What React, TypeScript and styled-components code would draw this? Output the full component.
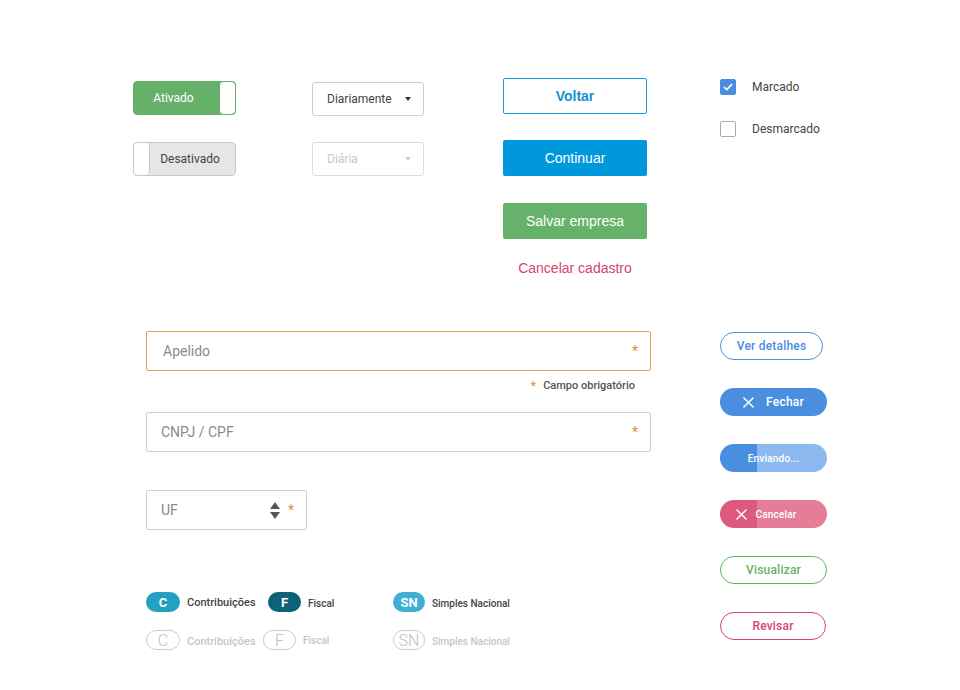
import styled, { createGlobalStyle } from 'styled-components'

const Global = createGlobalStyle`
    html, body { margin: 0; padding: 0; background: #fff; }
    body { font-family: Roboto, "Liberation Sans", sans-serif; color: #444; }
    * { box-sizing: border-box; }
`

const Page = styled.div`
    width: 960px;
    height: 690px;
    padding: 78px 0 0 133px;
`

const Top = styled.div`
    display: flex;
    align-items: flex-start;
`

const Col = styled.div<{ $w?: number, $pt?: number, $gap: number, $center?: boolean }>`
    display: flex;
    flex-direction: column;
    ${p => p.$w ? `width: ${p.$w}px;` : ''}
    padding-top: ${p => p.$pt || 0}px;
    gap: ${p => p.$gap}px;
    align-items: ${p => p.$center ? 'center' : 'flex-start'};
`

const ButtonCol = styled(Col)`
    width: 144px;
    margin-right: 73px;
`

const Toggle = styled.div<{ $on?: boolean }>`
    display: flex;
    align-items: center;
    flex-direction: ${p => p.$on ? 'row' : 'row-reverse'};
    width: 103px;
    height: 34px;
    border-radius: 4px;
    border: 1px solid ${p => p.$on ? '#66b16a' : '#c9c9c9'};
    background: ${p => p.$on ? '#66b16a' : '#e6e6e6'};
    overflow: hidden;
    > span {
        flex: 1;
        text-align: center;
        font-size: 12px;
        color: ${p => p.$on ? '#fff' : '#444'};
        padding-right: ${p => p.$on ? 6 : 5}px;
    }
    > i {
        width: 16px;
        height: 100%;
        background: #fff;
        border-radius: 4px;
        border-${p => p.$on ? 'left' : 'right'}: 1px solid ${p => p.$on ? '#66b16a' : '#c9c9c9'};
    }
`

const Select = styled.div<{ $disabled?: boolean }>`
    display: flex;
    align-items: center;
    justify-content: space-between;
    width: 112px;
    height: 34px;
    padding: 0 12px 0 14px;
    border: 1px solid ${p => p.$disabled ? '#dcdcdc' : '#cfcfcf'};
    border-radius: 3px;
    font-size: 12px;
    color: ${p => p.$disabled ? '#c8c8c8' : '#444'};
    &::after {
        content: '';
        border-left: 3.5px solid transparent;
        border-right: 3.5px solid transparent;
        border-top: 4px solid ${p => p.$disabled ? '#ccc' : '#333'};
    }
`

const Button = styled.div<{ $kind: 'outline' | 'blue' | 'green' }>`
    width: 144px;
    height: 36px;
    display: flex;
    align-items: center;
    justify-content: center;
    border-radius: 2px;
    font-family: "Liberation Sans", Arial, sans-serif;
    font-size: 14px;
    ${p => p.$kind === 'outline' ? `
        border: 1px solid #1a9ad6;
        color: #1590d0;
        font-weight: 700;
    ` : `
        background: ${p.$kind === 'blue' ? '#0098dc' : '#67b26b'};
        color: #fff;
    `}
`

const LinkButton = styled.div`
    width: 144px;
    text-align: center;
    margin-top: -5px;
    font-family: "Liberation Sans", Arial, sans-serif;
    font-size: 14px;
    color: #d6446f;
`

const Check = styled.div<{ $on?: boolean }>`
    display: flex;
    align-items: center;
    gap: 16px;
    font-size: 12px;
    color: #444;
    > i {
        width: 16px;
        height: 16px;
        border-radius: 2px;
        display: flex;
        align-items: center;
        justify-content: center;
        background: ${p => p.$on ? '#4a8ee0' : '#fff'};
        border: 1px solid ${p => p.$on ? '#4a8ee0' : '#aaa'};
    }
`

const Bottom = styled.div`
    display: flex;
    align-items: flex-start;
    margin-top: 55px;
`

const Form = styled.div`
    width: 587px;
    padding-left: 13px;
    display: flex;
    flex-direction: column;
`

const Field = styled.div<{ $focus?: boolean, $w?: number }>`
    display: flex;
    align-items: center;
    width: ${p => p.$w || 505}px;
    height: 40px;
    padding: 0 12px 0 ${p => p.$focus ? 16 : 14}px;
    border: 1px solid ${p => p.$focus ? '#e2a052' : '#d0d0d0'};
    border-radius: 2px;
    font-size: 14px;
    color: #8a8a8a;
    > span { flex: 1; }
`

const Star = styled.b<{ $size?: number }>`
    color: #f08a32;
    font-weight: 400;
    font-size: ${p => p.$size || 14}px;
`

const Required = styled.div`
    width: 505px;
    display: flex;
    justify-content: flex-end;
    align-items: center;
    gap: 7px;
    padding-right: 16px;
    margin: 7px 0 19px;
    font-size: 11px;
    font-weight: 500;
    color: #555;
`

const Stepper = styled.div`
    display: flex;
    flex-direction: column;
    gap: 3px;
    margin-right: 8px;
    &::before, &::after {
        content: '';
        border-left: 5.5px solid transparent;
        border-right: 5.5px solid transparent;
    }
    &::before { border-bottom: 7px solid #555; }
    &::after { border-top: 7px solid #555; }
`

const Tags = styled.div`
    display: flex;
    flex-direction: column;
    gap: 18px;
    margin-top: 62px;
`

const TagRow = styled.div`
    display: flex;
    align-items: center;
`

const TagCell = styled.div<{ $w?: number, $muted?: boolean }>`
    display: flex;
    align-items: center;
    gap: 7px;
    ${p => p.$w ? `width: ${p.$w}px;` : ''}
    color: ${p => p.$muted ? '#c6c6c6' : '#444'};
    font-weight: 500;
`

const Pill = styled.div<{ $bg?: string, $w: number }>`
    width: ${p => p.$w}px;
    height: 20px;
    border-radius: 10px;
    display: flex;
    align-items: center;
    justify-content: center;
    font-size: ${p => p.$bg ? 13 : 16}px;
    font-weight: ${p => p.$bg ? 700 : 300};
    ${p => p.$bg ? `background: ${p.$bg}; color: #fff;` : 'border: 1px solid #cdcdcd; color: #c0c0c0;'}
`

const TagLabel = styled.span<{ $size: number, $drop?: number }>`
    font-size: ${p => p.$size}px;
    margin-top: ${p => p.$drop || 0}px;
`

const Side = styled.div`
    display: flex;
    flex-direction: column;
    gap: 28px;
    padding-top: 1px;
`

const Round = styled.div<{ $color: string, $fill?: string, $split?: string, $w?: number, $small?: boolean }>`
    width: ${p => p.$w || 107}px;
    height: 28px;
    border-radius: 14px;
    display: flex;
    align-items: center;
    justify-content: center;
    gap: 12px;
    font-size: ${p => p.$small ? 10 : 12}px;
    font-weight: 500;
    letter-spacing: 0.2px;
    ${p => p.$fill ? `
        color: #fff;
        background: ${p.$split ? `linear-gradient(to right, ${p.$split} 37px, ${p.$fill} 37px)` : p.$fill};
    ` : `
        color: ${p.$color};
        border: 1px solid ${p.$color};
    `}
`

const CloseIcon = ({ size = 11 }: { size?: number }) => (
    <svg width={size} height={size} viewBox="0 0 12 12">
        <path d="M1 1 L11 11 M11 1 L1 11" stroke="#fff" strokeWidth="1.6" strokeLinecap="round" />
    </svg>
)

const CheckIcon = () => (
    <svg width="10" height="8" viewBox="0 0 10 8">
        <path d="M1 4 L3.8 6.6 L9 1.2" fill="none" stroke="#fff" strokeWidth="1.7" />
    </svg>
)

export default () => (
    <Page>
        <Global />
        <Top>
            <Col $w={179} $pt={3} $gap={27}>
                <Toggle $on><span>Ativado</span><i /></Toggle>
                <Toggle><span>Desativado</span><i /></Toggle>
            </Col>
            <Col $w={191} $pt={4} $gap={26}>
                <Select>Diariamente</Select>
                <Select $disabled>Diária</Select>
            </Col>
            <ButtonCol $gap={26}>
                <Button $kind="outline">Voltar</Button>
                <Button $kind="blue">Continuar</Button>
                <Button $kind="green" style={{ marginTop: 1 }}>Salvar empresa</Button>
                <LinkButton>Cancelar cadastro</LinkButton>
            </ButtonCol>
            <Col $pt={1} $gap={26}>
                <Check $on><i><CheckIcon /></i>Marcado</Check>
                <Check><i />Desmarcado</Check>
            </Col>
        </Top>
        <Bottom>
            <Form>
                <Field $focus><span>Apelido</span><Star>*</Star></Field>
                <Required><Star $size={13}>*</Star>Campo obrigatório</Required>
                <Field><span>CNPJ / CPF</span><Star>*</Star></Field>
                <Field $w={161} style={{ marginTop: 38 }}>
                    <span>UF</span><Stepper /><Star>*</Star>
                </Field>
                <Tags>
                    <TagRow>
                        <TagCell $w={122}><Pill $bg="#26a0c2" $w={34}>C</Pill><TagLabel $size={11}>Contribuições</TagLabel></TagCell>
                        <TagCell $w={125}><Pill $bg="#0e6278" $w={33}>F</Pill><TagLabel $size={10} $drop={2}>Fiscal</TagLabel></TagCell>
                        <TagCell><Pill $bg="#40b0d2" $w={32}>SN</Pill><TagLabel $size={10} $drop={2}>Simples Nacional</TagLabel></TagCell>
                    </TagRow>
                    <TagRow>
                        <TagCell $w={117} $muted><Pill $w={34}>C</Pill><TagLabel $size={11} $drop={3}>Contribuições</TagLabel></TagCell>
                        <TagCell $w={130} $muted><Pill $w={33}>F</Pill><TagLabel $size={10}>Fiscal</TagLabel></TagCell>
                        <TagCell $muted><Pill $w={32}>SN</Pill><TagLabel $size={10} $drop={2}>Simples Nacional</TagLabel></TagCell>
                    </TagRow>
                </Tags>
            </Form>
            <Side>
                <Round $color="#4a8ee0" $w={103}>Ver detalhes</Round>
                <Round $color="#fff" $fill="#4a8ee0"><CloseIcon />Fechar</Round>
                <Round $color="#fff" $fill="#8cb9f0" $split="#4a8ee0" $small>Enviando...</Round>
                <Round $color="#fff" $fill="#e57c98" $split="#dc5a7e" $small style={{ gap: 8, paddingRight: 14 }}><CloseIcon />Cancelar</Round>
                <Round $color="#66b16a">Visualizar</Round>
                <Round $color="#d6446f" $w={106}>Revisar</Round>
            </Side>
        </Bottom>
    </Page>
)
